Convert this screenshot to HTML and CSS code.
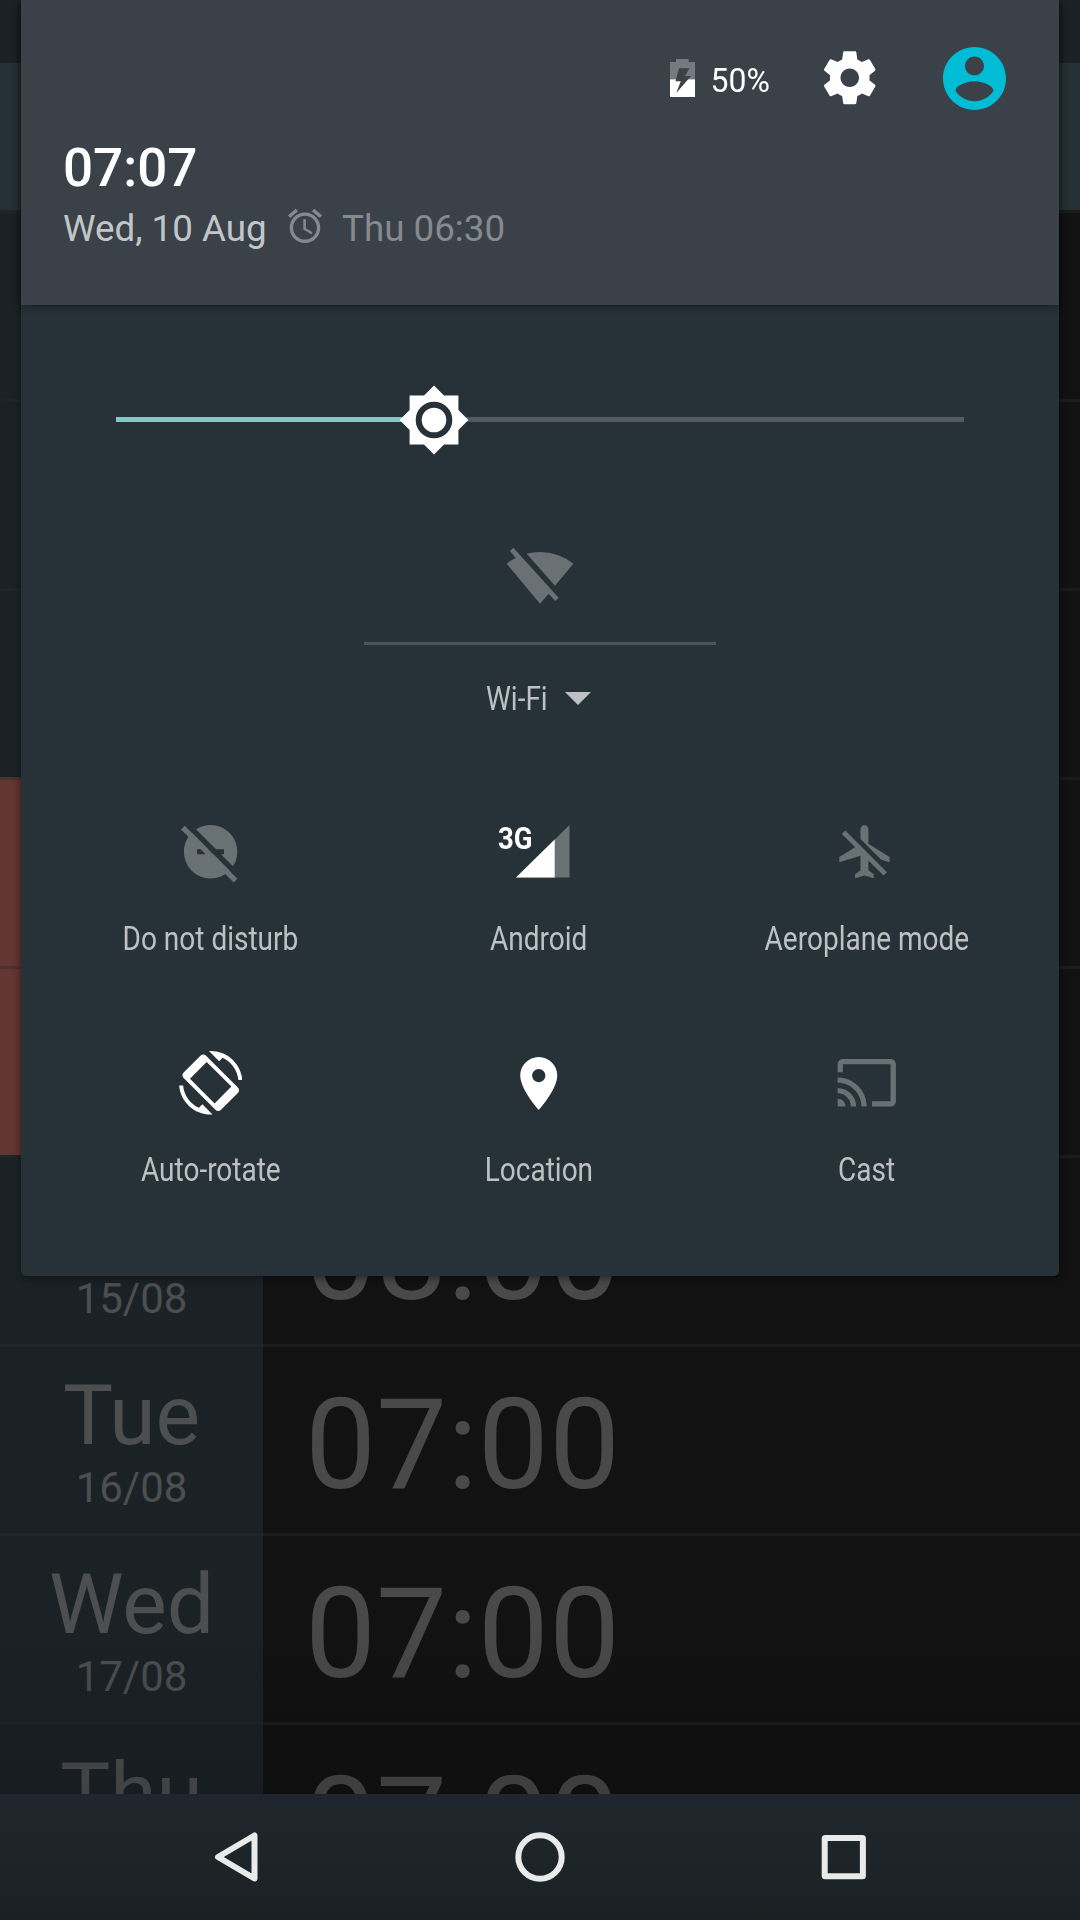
FILE: index.html
```html
<!DOCTYPE html>
<html lang="en-GB">
<head>
<meta charset="utf-8">
<title>Quick settings</title>
<link rel="stylesheet" href="styles.css">
</head>
<body>
<div class="screen">
  <main class="app">
    <div class="status-bar"></div>
    <div class="toolbar"></div>
    <div class="row"><div class="day"></div><div class="alarm"></div></div>
    <div class="row"><div class="day"></div><div class="alarm"></div></div>
    <div class="row"><div class="day"></div><div class="alarm"></div></div>
    <div class="row weekend"><div class="day"></div><div class="alarm"></div></div>
    <div class="row weekend"><div class="day"></div><div class="alarm"></div></div>
    <div class="row"><div class="day"><span class="day-name">&nbsp;</span><span class="day-date">15/08</span></div><div class="alarm">08:00</div></div>
    <div class="row"><div class="day"><span class="day-name">Tue</span><span class="day-date">16/08</span></div><div class="alarm">07:00</div></div>
    <div class="row"><div class="day"><span class="day-name">Wed</span><span class="day-date">17/08</span></div><div class="alarm">07:00</div></div>
    <div class="row"><div class="day"><span class="day-name">Thu</span></div><div class="alarm">07:00</div></div>
    <div class="fade"></div>
  </main>

  <nav class="nav-bar">
    <svg class="nav-icon" viewBox="0 0 60 60"><path d="M48.500 8.500V51.500L12 30Z"/></svg>
    <svg class="nav-icon" viewBox="0 0 60 60"><circle cx="30" cy="30" r="21.700"/></svg>
    <svg class="nav-icon" viewBox="0 0 60 60"><rect x="10.700" y="11" width="38.200" height="38.200" rx="0.500"/></svg>
  </nav>

  <section class="panel">
    <header class="header">
      <div class="system-row">
        <svg class="battery" viewBox="0 0 25 38">
          <defs><mask id="bolt"><rect width="25" height="38" fill="#fff"/><path d="M9 9.300H19.500L15 17H21L6.300 34L10.800 22.300H5.500Z" fill="#000"/></mask></defs>
          <g mask="url(#bolt)"><path d="M6 0H18.700V3H25V20.300H0V3H6Z" fill="#737b7e"/><path d="M0 20.300H25V38H0Z" fill="#fff"/></g>
        </svg>
        <span class="percent">50%</span>
        <svg class="gear" viewBox="0 0 24 24"><path d="M19.430 12.980c.04-.32.07-.64.07-.98s-.03-.66-.07-.98l2.110-1.650c.19-.15.24-.42.12-.64l-2-3.460c-.12-.22-.39-.3-.61-.22l-2.490 1c-.52-.4-1.080-.73-1.690-.98l-.38-2.650C14.460 2.180 14.250 2 14 2h-4c-.25 0-.46.18-.49.42l-.38 2.650c-.61.25-1.170.59-1.690.98l-2.490-1c-.23-.09-.49 0-.61.22l-2 3.460c-.13.22-.07.49.12.64l2.110 1.650c-.04.32-.07.65-.07.98s.03.66.07.98l-2.110 1.650c-.19.15-.24.42-.12.64l2 3.460c.12.22.39.3.61.22l2.490-1c.52.4 1.080.73 1.690.98l.38 2.650c.03.24.24.42.49.42h4c.25 0 .46-.18.49-.42l.38-2.650c.61-.25 1.170-.59 1.690-.98l2.490 1c.23.09.49 0 .61-.22l2-3.460c.12-.22.07-.49-.12-.64l-2.110-1.650zM12 15.500c-1.930 0-3.500-1.570-3.500-3.500s1.570-3.500 3.500-3.500 3.500 1.570 3.500 3.500-1.570 3.500-3.500 3.500z"/></svg>
        <svg class="user" viewBox="2 2 20 20"><path d="M12 2C6.480 2 2 6.480 2 12s4.480 10 10 10 10-4.480 10-10S17.520 2 12 2zm0 3c1.660 0 3 1.340 3 3s-1.340 3-3 3-3-1.340-3-3 1.340-3 3-3zm0 14.200c-2.500 0-4.710-1.280-6-3.220.03-1.990 4-3.080 6-3.080 1.990 0 5.970 1.090 6 3.080-1.290 1.940-3.500 3.220-6 3.220z"/></svg>
      </div>
      <div class="clock">07:07</div>
      <div class="date-row">
        <span class="date">Wed, 10 Aug</span>
        <svg class="alarm-icon" viewBox="2 1.800 20 20.400"><path d="M22 5.720l-4.600-3.860-1.290 1.530 4.600 3.860L22 5.720zM7.880 3.390L6.600 1.860 2 5.710l1.290 1.530 4.590-3.850zM12.500 8H11v6l4.750 2.850.75-1.230-4-2.370V8zM12 4c-4.970 0-9 4.030-9 9s4.020 9 9 9c4.970 0 9-4.030 9-9s-4.030-9-9-9zm0 16c-3.870 0-7-3.130-7-7s3.130-7 7-7 7 3.130 7 7-3.130 7-7 7z"/></svg>
        <span class="next-alarm">Thu 06:30</span>
      </div>
    </header>

    <div class="brightness">
      <div class="track"><div class="track-fill"></div></div>
      <svg class="thumb" viewBox="-35 -35 70 70">
        <path d="M0-34.400L10-24.400H24.400V-10L34.400 0L24.400 10V24.400H10L0 34.400L-10 24.400H-24.400V10L-34.400 0L-24.400-10V-24.400H-10Z" fill="#fff"/>
        <circle r="15.300" fill="none" stroke="#263238" stroke-width="6"/>
      </svg>
    </div>

    <div class="wifi">
      <svg class="wifi-icon" viewBox="498 82 204 174"><path d="M560 102Q580 97 600 97Q654 97 700 132L645 198ZM500 132Q512 122 527 115L510 94L520 84L656 234L646 244L626 222L600 252Z"/></svg>
      <div class="wifi-label"><span class="label wifi-name">Wi-Fi</span><svg class="caret" viewBox="0 0 26 13"><path d="M0 0H26L13 13Z"/></svg></div>
    </div>

    <div class="tiles">
      <div class="tile">
        <svg class="icon off" viewBox="237 60 189 189">
          <defs><mask id="dnd"><circle cx="331" cy="154.500" r="79.500" fill="#fff"/><path d="M240 40L440 240V263L240 63ZM291 147H371V162H291Z" fill="#000"/><path d="M243 88L254 77L411 235L400 246Z" fill="#fff"/></mask></defs>
          <rect x="237" y="60" width="189" height="189" mask="url(#dnd)"/>
        </svg>
        <span class="label">Do not disturb</span>
      </div>
      <div class="tile">
        <div class="icon signal"><span class="network">3G</span><svg class="bars" viewBox="0 0 53.500 52.500"><path d="M0 52.500L53.500 0V52.500Z" fill="#6a7276"/><path d="M0 52.500L38.700 14.500V52.500Z" fill="#fff"/></svg></div>
        <span class="label">Android</span>
      </div>
      <div class="tile">
        <svg class="icon plane off" viewBox="0 0 24 24"><path d="M13 9V3.500c0-.83-.67-1.500-1.500-1.500S10 2.670 10 3.500v3.680l7.830 7.830L21 16v-2l-8-5zM3 5.270l4.990 4.990L2 14v2l8-2.500V19l-2 1.500V22l3.500-1 3.500 1v-1.500L13 19v-3.730L18.730 21 20 19.730 4.270 4 3 5.270z"/></svg>
        <span class="label">Aeroplane mode</span>
      </div>
      <div class="tile">
        <svg class="icon" viewBox="0 0 24 24"><path fill-rule="evenodd" d="M16.480 2.520c3.270 1.550 5.610 4.720 5.970 8.480h1.500C23.440 4.840 18.290 0 12 0l-.66.03 3.810 3.810 1.330-1.320zm-6.250-.77c-.59-.59-1.540-.59-2.120 0L1.750 8.110c-.59.59-.59 1.540 0 2.120l12.020 12.020c.59.59 1.540.59 2.120 0l6.360-6.360c.59-.59.59-1.540 0-2.120L10.230 1.750zM10.450 4.150L19.800 13.450L13.450 19.800L4.150 10.450ZM7.520 21.480C4.250 19.940 1.910 16.760 1.550 13H.05C.56 19.160 5.710 24 12 24l.66-.03-3.810-3.810-1.330 1.320z"/></svg>
        <span class="label">Auto-rotate</span>
      </div>
      <div class="tile">
        <svg class="icon" viewBox="0 -.3 24 24"><path d="M12 2C8.130 2 5 5.130 5 9c0 5.250 7 13 7 13s7-7.750 7-13c0-3.870-3.130-7-7-7zm0 9.500c-1.380 0-2.500-1.120-2.500-2.500s1.120-2.500 2.500-2.500 2.500 1.120 2.500 2.500-1.120 2.500-2.500 2.500z"/></svg>
        <span class="label">Location</span>
      </div>
      <div class="tile">
        <svg class="icon off" viewBox="0 0 24 24"><path d="M21 3H3c-1.100 0-2 .9-2 2v3h2V5h18v14h-7v2h7c1.100 0 2-.9 2-2V5c0-1.100-.9-2-2-2zM1 18v3h3c0-1.660-1.340-3-3-3zm0-4v2c2.760 0 5 2.240 5 5h2c0-3.870-3.130-7-7-7zm0-4v2c4.970 0 9 4.030 9 9h2c0-6.080-4.930-11-11-11z"/></svg>
        <span class="label">Cast</span>
      </div>
    </div>
  </section>
</div>
</body>
</html>
```
FILE: styles.css
```css
* { box-sizing: border-box; }
body { margin: 0; background: #121212; font-family: Roboto, sans-serif; }
svg { display: block; flex: none; }

.screen { position: relative; width: 1080px; height: 1920px; overflow: hidden; }

/* Alarm list behind the shade */
.app { position: relative; height: 1794px; overflow: hidden; background: #121212; }
.status-bar { height: 63px; background: #1b2225; }
.toolbar { height: 147px; background: #253036; }
.row { display: flex; height: 189px; }
.day {
  width: 263px; flex: none; display: flex; flex-direction: column; align-items: center;
  background: #1b2226; border-top: 3px solid #202528; color: #4c4e50; padding-top: 20px;
}
.weekend .day { background: #633533; border-top-color: #503030; }
.day-name { font-size: 84px; line-height: 98px; }
.day-date { font-size: 42px; line-height: 50px; margin-top: -2px; }
.alarm {
  flex: 1; border-top: 3px solid #1c1c1c; padding: 24px 0 0 42px;
  font-size: 126.500px; line-height: 148px; color: #494949;
}
.fade {
  position: absolute; left: 0; right: 0; bottom: 0; height: 170px;
  background: linear-gradient(rgba(0, 0, 0, 0), rgba(0, 0, 0, .16));
}

/* Navigation bar */
.nav-bar {
  height: 126px; display: flex; justify-content: center; align-items: center; gap: 244px;
  background: linear-gradient(#1f262e, #1d2528 50%, #1a2123);
}
.nav-icon { width: 60px; height: 60px; fill: none; stroke: #e9eaea; stroke-width: 6; stroke-linejoin: round; }

/* Quick settings shade */
.panel {
  position: absolute; left: 21px; top: 0; width: 1038px; height: 1276px;
  background: #263238; border-radius: 0 0 5px 5px; box-shadow: 0 2px 9px rgba(0, 0, 0, .5);
}
.header {
  position: relative; height: 305px; padding: 46px 53px 0 42px;
  background: #3a4148; box-shadow: 0 2px 7px rgba(0, 0, 0, .4);
}
.system-row { display: flex; justify-content: flex-end; align-items: center; height: 64px; }
.battery { width: 25px; height: 38px; }
.percent { width: 60px; margin: 3px 0 0 16px; font-size: 32px; line-height: 38px; color: #fff; transform: scaleY(1.05); }
.gear { width: 63.500px; height: 63.500px; margin-left: 47px; fill: #fff; }
.user { width: 63px; height: 63px; margin-left: 62px; fill: #00bcd4; }
.clock { margin-top: 27px; font-size: 53px; line-height: 62px; font-weight: 500; color: #fff; }
.date-row { display: flex; align-items: center; margin-top: 9px; height: 42px; font-size: 36.750px; line-height: 42px; white-space: nowrap; }
.date { color: #c3c6c8; width: 203px; }
.alarm-icon { width: 34px; height: 36px; margin: -6px 0 0 22px; fill: #858a8f; }
.next-alarm { margin-left: 20px; color: #858a8f; }

.brightness { position: relative; height: 230px; padding: 112px 95px 0; }
.track { height: 5px; background: #515b60; }
.track-fill { width: 37.500%; height: 100%; background: #80cbc4; }
.thumb { position: absolute; left: 378px; top: 80px; width: 70px; height: 70px; }

.wifi { width: 352px; height: 252px; margin: 0 auto; padding-top: 12px; }
.wifi-icon { width: 68px; height: 58px; margin: 0 auto; fill: #697175; }
.wifi-label { display: flex; align-items: center; height: 105px; margin-top: 37px; padding: 3px 0 0 122px; border-top: 3px solid #4a555a; }
.wifi-name { width: 62px; margin-top: 1px; }
.caret { width: 26px; height: 13px; margin: 2px 0 0 17px; fill: #bec1c3; }

.tiles { display: grid; grid-template-columns: repeat(3, 328px); grid-auto-rows: 231px; padding-left: 25.500px; }
.tile { display: flex; flex-direction: column; align-items: center; padding-top: 33px; }
.icon { width: 63.500px; height: 63.500px; fill: #fff; }
.off { fill: #697175; }
.plane { margin-left: -2px; }
.label {
  display: inline-block; height: 38px; white-space: nowrap;
  font-size: 32px; line-height: 38px; color: #bec1c3; transform: scale(.875, 1.05);
}
.tile .label { margin-top: 35px; }
.wifi-name { transform-origin: left; }
.signal { display: flex; width: 72px; margin-left: -9px; padding-top: 5px; }
.network { font-size: 32px; line-height: 36px; font-weight: 700; color: #fff; width: 18px; transform: scaleX(.86); transform-origin: left; margin-top: -5px; }
.bars { width: 53.500px; height: 52.500px; }
```
